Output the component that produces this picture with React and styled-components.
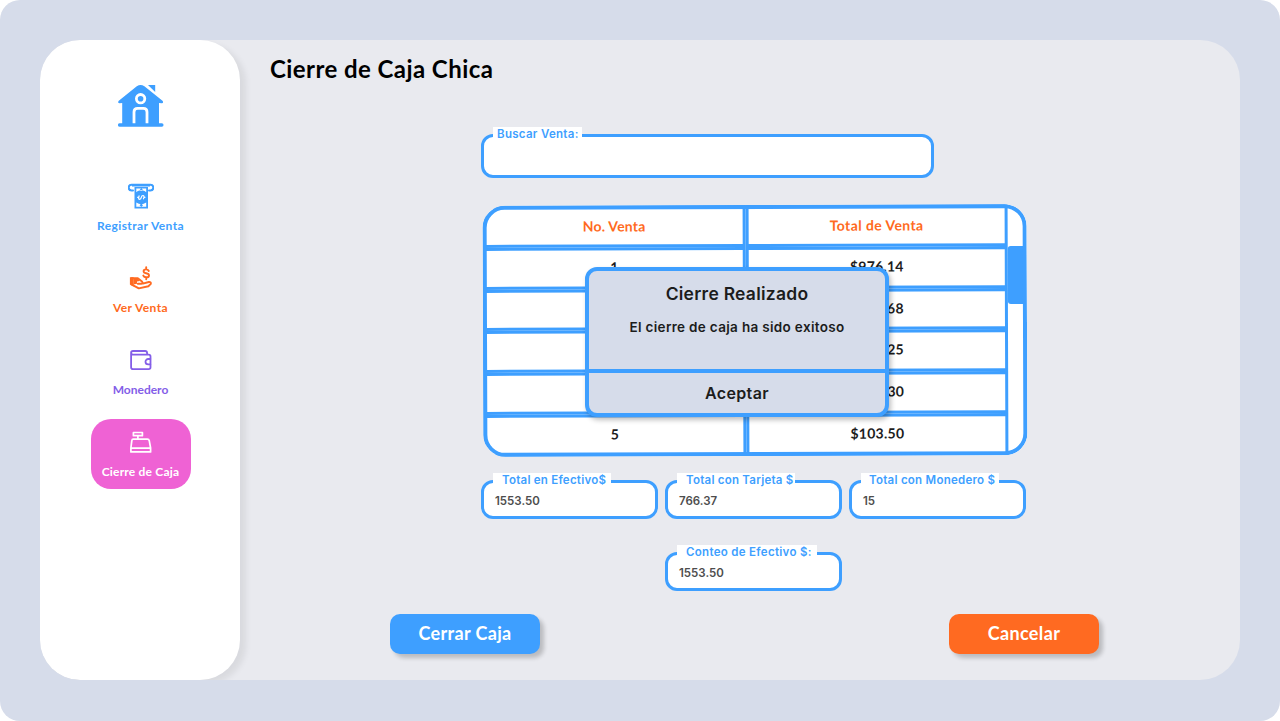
import React from 'react';
import styled, { createGlobalStyle } from 'styled-components';

const blue = '#3e9fff';
const orange = '#ff6a21';
const purple = '#845ee8';
const rounded = "Lato, 'Open Sans', sans-serif";
const grotesk = "Inter, 'Liberation Sans', sans-serif";

const GlobalStyle = createGlobalStyle`
  * { box-sizing: border-box; }
  body { margin: 0; background: #fff; font-family: ${rounded}; }
`;

const Screen = styled.div`
  width: 1280px;
  height: 721px;
  padding: 40px 40px 41px;
  border-radius: 20px;
  background: #d6dcea;
`;

const Panel = styled.div`
  display: flex;
  height: 640px;
  border-radius: 40px;
  background: #e9eaef;
  overflow: hidden;
`;

const Sidebar = styled.nav`
  flex: none;
  display: flex;
  flex-direction: column;
  align-items: center;
  width: 200px;
  padding: 45px 0 0 1px;
  border-radius: 40px;
  background: #fff;
  box-shadow: 6px 4px 6px rgba(0, 0, 0, 0.07);
`;

const Logo = styled.div`
  height: 42px;
  margin-bottom: 46px;
  svg { display: block; }
`;

const NavItem = styled.a`
  display: flex;
  flex-direction: column;
  align-items: center;
  width: 100px;
  height: 70px;
  margin-bottom: 12px;
  padding-top: 10px;
  border-radius: 20px;
  background: ${(p) => (p.$active ? '#ef62d4' : 'transparent')};
  color: ${(p) => p.$color};
  font-size: 12px;
  font-weight: 700;
  line-height: 16px;
  letter-spacing: ${(p) => p.$track || 0}px;
  white-space: nowrap;
  svg { display: block; margin-bottom: 8.5px; }
`;

const Main = styled.main`
  flex: 1;
  display: flex;
  flex-direction: column;
  padding: 13px 0 0 30px;
`;

const Title = styled.h1`
  margin: 0;
  color: #000;
  font-size: 24px;
  font-weight: 700;
  line-height: 32px;
  letter-spacing: 0.43px;
`;

const Form = styled.section`
  position: relative;
  width: 545px;
  margin: 49px 0 0 211px;
`;

const Field = styled.label`
  display: flex;
  flex-direction: column;
  align-items: flex-start;
  width: ${(p) => p.$width}px;
  height: ${(p) => p.$height}px;
  border: 3px solid ${blue};
  border-radius: 12px;
  background: #fff;
  padding-left: 9px;
`;

const Legend = styled.span`
  flex: none;
  width: ${(p) => p.$width}px;
  height: 14px;
  margin-top: -10px;
  padding-left: ${(p) => p.$inset}px;
  background: #fff;
  color: ${blue};
  font: 600 11.5px/14px ${grotesk};
  letter-spacing: ${(p) => p.$track || 0}px;
  white-space: nowrap;
`;

const Value = styled.span`
  padding: 6px 0 0 2px;
  color: #4d4d4d;
  font: 600 11.5px/16px ${grotesk};
`;

const TableFrame = styled.div`
  position: relative;
  display: flex;
  width: 544px;
  height: 251px;
  margin: 27px 0 0 1.5px;
  border-radius: 22px;
  background: #fff;
  overflow: hidden;
  transform: rotate(-0.2deg);
  &::after {
    content: '';
    position: absolute;
    inset: 0;
    border: 4px solid ${blue};
    border-radius: 22px;
  }
`;

const Rows = styled.div`
  display: grid;
  grid-template-columns: 263px 262px;
  grid-template-rows: repeat(6, 1fr);
  width: 525px;
`;

const Cell = styled.div`
  display: flex;
  align-items: center;
  justify-content: center;
  padding-bottom: ${(p) => (p.$head ? 0 : 3)}px;
  border: 3px solid ${blue};
  color: ${(p) => (p.$head ? orange : '#1c1c1c')};
  font-size: 14px;
  font-weight: 700;
  letter-spacing: ${(p) => p.$track || 0}px;
`;

const Scroll = styled.div`
  flex: 1;
  padding-top: 42px;
`;

const Thumb = styled.div`
  width: 18px;
  height: 58px;
  border-radius: 3px;
  background: ${blue};
`;

const Totals = styled.div`
  display: flex;
  justify-content: space-between;
  margin-top: 24px;
`;

const Count = styled.div`
  display: flex;
  justify-content: center;
  margin-top: 33px;
`;

const Dialog = styled.div`
  position: absolute;
  left: 104px;
  top: 133px;
  display: flex;
  flex-direction: column;
  width: 304px;
  height: 150px;
  border: 4px solid ${blue};
  border-radius: 12px;
  background: #d6dcea;
  box-shadow: 2px 3px 5px rgba(0, 0, 0, 0.25);
  color: #1c1c1c;
  font-family: ${grotesk};
  text-align: center;
`;

const DialogTitle = styled.h2`
  margin: 11px 0 0;
  font-size: 17.5px;
  font-weight: 600;
  line-height: 24px;
  letter-spacing: 0.25px;
`;

const DialogText = styled.p`
  flex: 1;
  margin: 11px 0 0;
  font-size: 13.5px;
  font-weight: 600;
  line-height: 20px;
  letter-spacing: 0.32px;
`;

const DialogAction = styled.button`
  flex: none;
  height: 44px;
  padding: 0 0 1px;
  border: 0;
  border-top: 4px solid ${blue};
  background: none;
  color: inherit;
  font: 600 16px/36px ${grotesk};
  letter-spacing: 0.35px;
`;

const Actions = styled.footer`
  display: flex;
  justify-content: space-between;
  width: 709px;
  margin: 23px 0 0 120px;
`;

const Button = styled.button`
  width: 150px;
  height: 40px;
  padding: 0 0 2px;
  border: 0;
  border-radius: 10px;
  background: ${(p) => p.$bg};
  box-shadow: 4px 4px 4px rgba(0, 0, 0, 0.2);
  color: #fff;
  font: 700 18px/24px ${rounded};
  letter-spacing: 0.35px;
`;

const HouseIcon = () => (
  <svg width="46" height="42" viewBox="0 0 46 42" fill={blue}>
    <path d="M30 0H37.2V7Z" />
    <path d="M18.8 1.2Q22.6-1 26.4 1.2L44.5 15.8Q46 18 43.8 18.3L41 18V38.3H43.8A1.7 1.7 0 0 1 43.8 41.8H1.7A1.7 1.7 0 0 1 1.7 38.3H4.2V18L1.6 18.3Q-.8 18 .8 15.8Z" />
    <g fill="none" stroke="#fff" strokeWidth="2.8">
      <circle cx="22.6" cy="13.7" r="4.2" />
      <path d="M16 38.3V27Q16 23.3 19.7 23.3H25.3Q29 23.3 29 27V38.3" />
    </g>
  </svg>
);

const CashIcon = () => (
  <svg width="26" height="26" viewBox="0 0 26 26">
    <path d="M5 7.4H3.5A2.8 2.8 0 0 1 3.5 1.8H22.5A2.8 2.8 0 0 1 22.5 7.4H21" fill="none" stroke={blue} strokeWidth="2" strokeLinecap="round" />
    <path d="M4 1H22V3.6H4Z M6.5 4H20V25.5H6.5Z" fill={blue} />
    <path d="M8.3 5.4H18.2V9.2Q15.8 6.6 13.2 8Q10.7 6.6 8.3 9.2ZM8.3 19.4Q13.3 23 18.2 19.4V23.8H8.3Z" fill="#fff" />
    <circle cx="13.3" cy="14.4" r="5.6" fill={blue} />
    <path d="M13.3 4.8L15 7.3H11.6ZM13.3 20.5L15 22.2L13.3 24L11.6 22.2Z" fill={blue} />
    <path d="M11.3 12.5Q9.8 16 11.5 16.3Q12.9 16.4 13.3 14.4T15.1 12.5Q16.8 12.9 15.3 16.3M9.2 14.4H10.3M16.3 14.4H17.4" fill="none" stroke="#fff" strokeWidth="1.2" />
  </svg>
);

const HandIcon = () => (
  <svg width="26" height="26" viewBox="0 0 26 26" fill="none" stroke={orange} strokeLinecap="round" strokeLinejoin="round">
    <path d="M20.8 6Q20 4.4 18 4.4Q15.6 4.4 15.6 6.2Q15.6 7.8 18.1 8.2Q21 8.7 21 10.4Q21 12.3 18.3 12.3Q16 12.3 15.3 10.6M18.2 2.3V4.4M18.2 12.3V14.2" strokeWidth="1.9" />
    <path d="M1.9 12.3H5.6V21.4L1.9 19.4Z" fill={orange} stroke="none" />
    <path d="M3.5 13.2H9.8L14 16.5Q15.4 18.3 13.2 18.8H9.8M14.8 18.6L20.8 17Q23.4 16.8 22.8 18.9L20.4 21.2L10.8 23.4L3.3 19.4" strokeWidth="1.9" />
    <path d="M5.4 13.4H9.2L12 15.9L9 16.4V18.8L5.4 19.6Z" fill={orange} stroke="none" />
  </svg>
);

const WalletIcon = () => (
  <svg width="26" height="26" viewBox="0 0 26 26" fill="none" stroke={purple} strokeWidth="1.8" strokeLinecap="round" strokeLinejoin="round">
    <path d="M3.1 5.8V20.2Q3.1 22.1 5 22.1H20.7Q22.5 22.1 22.5 20.3V9.4Q22.5 7.7 20.7 7.7H5.1Q3.1 7.7 3.1 5.8Q3.1 4 5.1 4H17.1Q19.1 4 19.1 6V7.5" />
    <path d="M22.3 12H20.2A2.7 2.7 0 0 0 20.2 17.4H22.3" />
  </svg>
);

const RegisterIcon = () => (
  <svg width="26" height="26" viewBox="0 0 26 26" fill="none" stroke="#fff" strokeWidth="1.7" strokeLinejoin="round">
    <path d="M5.4 3.5H14.4V6.7H5.4ZM9.9 7V10.2M5.2 10.2H19.3Q20.9 10.2 21.3 11.8L22.6 19V22.9H2.9V19L3.8 11.8Q4 10.2 5.2 10.2ZM2.9 19.1H22.6" />
  </svg>
);

const sales = [
  ['1', '$976.14'],
  ['2', '$185.68'],
  ['3', '$320.25'],
  ['4', '$749.30'],
  ['5', '$103.50'],
];

export default function App() {
  return (
    <>
      <GlobalStyle />
      <Screen>
        <Panel>
          <Sidebar>
            <Logo><HouseIcon /></Logo>
            <NavItem $color={blue} $track={0.4}><CashIcon />Registrar Venta</NavItem>
            <NavItem $color={orange} $track={0.4}><HandIcon />Ver Venta</NavItem>
            <NavItem $color={purple} $track={0}><WalletIcon />Monedero</NavItem>
            <NavItem $color="#fff" $track={0.2} $active><RegisterIcon />Cierre de Caja</NavItem>
          </Sidebar>
          <Main>
            <Title>Cierre de Caja Chica</Title>
            <Form>
              <Field $width={453} $height={44}>
                <Legend $width={89} $inset={4} $track={0.3}>Buscar Venta:</Legend>
              </Field>
              <TableFrame>
                <Rows>
                  <Cell $head $track={0.2}>No. Venta</Cell>
                  <Cell $head $track={0.4}>Total de Venta</Cell>
                  {sales.map(([id, total]) => (
                    <React.Fragment key={id}>
                      <Cell>{id}</Cell>
                      <Cell $track={0.25}>{total}</Cell>
                    </React.Fragment>
                  ))}
                </Rows>
                <Scroll><Thumb /></Scroll>
              </TableFrame>
              <Totals>
                <Field $width={177} $height={39}>
                  <Legend $width={118} $inset={9} $track={0.24}>Total en Efectivo$</Legend>
                  <Value>1553.50</Value>
                </Field>
                <Field $width={177} $height={39}>
                  <Legend $width={118} $inset={9} $track={0.24}>Total con Tarjeta $</Legend>
                  <Value>766.37</Value>
                </Field>
                <Field $width={177} $height={39}>
                  <Legend $width={138} $inset={8} $track={0.26}>Total con Monedero $</Legend>
                  <Value>15</Value>
                </Field>
              </Totals>
              <Count>
                <Field $width={177} $height={39}>
                  <Legend $width={140} $inset={9} $track={0.3}>Conteo de Efectivo $:</Legend>
                  <Value>1553.50</Value>
                </Field>
              </Count>
              <Dialog role="dialog">
                <DialogTitle>Cierre Realizado</DialogTitle>
                <DialogText>El cierre de caja ha sido exitoso</DialogText>
                <DialogAction>Aceptar</DialogAction>
              </Dialog>
            </Form>
            <Actions>
              <Button $bg={blue}>Cerrar Caja</Button>
              <Button $bg={orange}>Cancelar</Button>
            </Actions>
          </Main>
        </Panel>
      </Screen>
    </>
  );
}
